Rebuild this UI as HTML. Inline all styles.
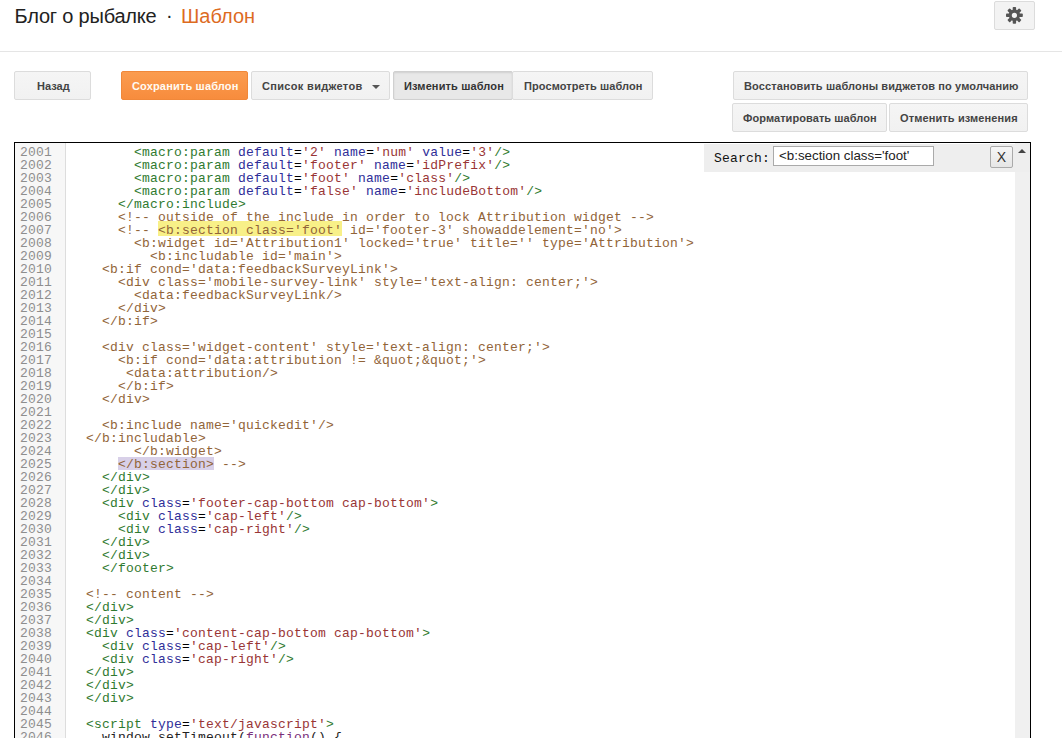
<!DOCTYPE html>
<html><head><meta charset="utf-8">
<style>
*{margin:0;padding:0;box-sizing:border-box}
html,body{width:1062px;height:738px;overflow:hidden;background:#fff}
body{position:relative;font-family:"Liberation Sans",sans-serif}
.title{position:absolute;left:16px;top:4px;font-size:20px;line-height:24px;color:#222;white-space:nowrap}
.title .dot{color:#222;padding:0 8px}
.or{color:#dd6b1f !important}
.hr{position:absolute;left:0;top:51px;width:1062px;height:1px;background:#e5e5e5}
.btn{position:absolute;height:29px;border:1px solid #dcdcdc;border-radius:2px;background:linear-gradient(#f5f5f5,#f1f1f1);color:#444;font-size:11px;font-weight:bold;line-height:29px;text-align:left;white-space:nowrap}
.gear{position:absolute;left:994px;top:1px;width:41px;height:29px;border:1px solid #dcdcdc;border-radius:2px;background:#f3f3f3}
.orange{background:linear-gradient(#fb9c4f,#f78c3d);border-color:#f0883a;color:#fffaf2}
.sel{background:#e8e8e8;border-color:#d0d0d0;box-shadow:inset 0 1px 2px rgba(0,0,0,.1);color:#333}
.editor{position:absolute;left:14px;top:142px;width:1017px;height:620px;border:1px solid #000;border-bottom:none;background:#fff;overflow:hidden}
.gutter{position:absolute;left:0;top:0;width:51px;height:100%;background:#f7f7f7;border-right:1px solid #ddd}
.code{position:absolute;font-family:"Liberation Mono",monospace;font-size:13px;line-height:13px;white-space:pre;letter-spacing:.2px}
.nums{left:5px;top:2.5px;color:#8e8e8e}
.lines{left:55px;top:2.5px;color:#000}
.t{color:#2f7a2f}.a{color:#2e2e98}.v{color:#993535}.c{color:#916438}.js{color:#222}.kw{color:#7a2f7a}
.hlb{position:absolute;left:143px;top:78px;width:184px;height:15px;background:#f8f088}
.hlb2{position:absolute;left:103px;top:314px;width:96px;height:13px;background:#d8d0e8}
.scroll{position:absolute;left:1000px;top:0;width:16px;height:100%;background:#f0f0f0}
.search{position:absolute;left:689px;top:1px;width:327px;height:28px;background:#eee}
.slabel{position:absolute;left:10px;top:8px;font-family:"Liberation Mono",monospace;font-size:13px;line-height:13px;color:#111;letter-spacing:.2px}
.sinput{position:absolute;left:69px;top:2px;width:161px;height:20px;border:1px solid #aaa;background:#fff;font-size:13.33px;line-height:18px;padding-left:5px;color:#222;white-space:nowrap}
.xbtn{position:absolute;left:286px;top:2px;width:23px;height:22px;border:1px solid #aaa;border-radius:2px;background:linear-gradient(#f6f6f6,#e6e6e6);font-size:14px;line-height:21px;text-align:center;color:#333}
.sarrow{position:absolute;left:1003px;top:6px;width:0;height:0;border-left:4px solid transparent;border-right:4px solid transparent;border-bottom:4px solid #444}
.ddarrow{position:absolute;width:0;height:0;border-left:4px solid transparent;border-right:4px solid transparent;border-top:4px solid #555}
</style></head><body>
<div class="title" style="left:14.5px;letter-spacing:-.2px">Блог о рыбалке</div>
<div class="title" style="left:166px;top:3px">·</div>
<div class="title or" style="left:181px">Шаблон</div>
<div class="gear"><svg width="41" height="29" viewBox="0 0 41 29" style="position:absolute;left:-1px;top:-1px"><g transform="translate(20.4 14.3)" fill="#555"><rect x="-1.7" y="-8.4" width="3.4" height="4.2" rx=".8" transform="rotate(0)"/><rect x="-1.7" y="-8.4" width="3.4" height="4.2" rx=".8" transform="rotate(45)"/><rect x="-1.7" y="-8.4" width="3.4" height="4.2" rx=".8" transform="rotate(90)"/><rect x="-1.7" y="-8.4" width="3.4" height="4.2" rx=".8" transform="rotate(135)"/><rect x="-1.7" y="-8.4" width="3.4" height="4.2" rx=".8" transform="rotate(180)"/><rect x="-1.7" y="-8.4" width="3.4" height="4.2" rx=".8" transform="rotate(225)"/><rect x="-1.7" y="-8.4" width="3.4" height="4.2" rx=".8" transform="rotate(270)"/><rect x="-1.7" y="-8.4" width="3.4" height="4.2" rx=".8" transform="rotate(315)"/><path fill-rule="evenodd" d="M0-5.7A5.7 5.7 0 1 1 0 5.7A5.7 5.7 0 1 1 0-5.7ZM0-2.6A2.6 2.6 0 1 0 0 2.6A2.6 2.6 0 1 0 0-2.6Z"/></g></svg></div>
<div class="hr"></div>
<div class="btn" style="left:14px;top:71px;width:77px;padding-left:22px">Назад</div>
<div class="btn orange" style="left:121px;top:71px;width:127px;padding-left:10px;letter-spacing:.16px">Сохранить шаблон</div>
<div class="btn" style="left:251px;top:71px;width:139px;padding-left:10px;letter-spacing:.33px">Список виджетов<span class="ddarrow" style="left:120px;top:13px"></span></div>
<div class="btn sel" style="left:393px;top:71px;width:120px;padding-left:10px;letter-spacing:.13px">Изменить шаблон</div>
<div class="btn" style="left:512px;top:71px;width:141px;padding-left:11px;letter-spacing:.08px">Просмотреть шаблон</div>
<div class="btn" style="left:733px;top:71px;width:295px;padding-left:10px;letter-spacing:.12px">Восстановить шаблоны виджетов по умолчанию</div>
<div class="btn" style="left:732px;top:103px;width:155px;padding-left:10px;letter-spacing:.07px">Форматировать шаблон</div>
<div class="btn" style="left:889px;top:103px;width:139px;padding-left:10px;letter-spacing:.12px">Отменить изменения</div>
<div class="editor">
<div class="gutter"></div><div class="hlb"></div><div class="hlb2"></div>
<div class="code nums">2001
2002
2003
2004
2005
2006
2007
2008
2009
2010
2011
2012
2013
2014
2015
2016
2017
2018
2019
2020
2021
2022
2023
2024
2025
2026
2027
2028
2029
2030
2031
2032
2033
2034
2035
2036
2037
2038
2039
2040
2041
2042
2043
2044
2045
2046</div>
<div class="code lines">        <span class="t">&lt;macro:param</span> <span class="a">default</span>=<span class="v">&#x27;2&#x27;</span> <span class="a">name</span>=<span class="v">&#x27;num&#x27;</span> <span class="a">value</span>=<span class="v">&#x27;3&#x27;</span><span class="t">/&gt;</span>
        <span class="t">&lt;macro:param</span> <span class="a">default</span>=<span class="v">&#x27;footer&#x27;</span> <span class="a">name</span>=<span class="v">&#x27;idPrefix&#x27;</span><span class="t">/&gt;</span>
        <span class="t">&lt;macro:param</span> <span class="a">default</span>=<span class="v">&#x27;foot&#x27;</span> <span class="a">name</span>=<span class="v">&#x27;class&#x27;</span><span class="t">/&gt;</span>
        <span class="t">&lt;macro:param</span> <span class="a">default</span>=<span class="v">&#x27;false&#x27;</span> <span class="a">name</span>=<span class="v">&#x27;includeBottom&#x27;</span><span class="t">/&gt;</span>
      <span class="t">&lt;/macro:include</span><span class="t">&gt;</span>
      <span class="c">&lt;!-- outside of the include in order to lock Attribution widget --&gt;</span>
      <span class="c">&lt;!-- <span>&lt;b:section class=&#x27;foot&#x27;</span> id=&#x27;footer-3&#x27; showaddelement=&#x27;no&#x27;&gt;</span>
        <span class="c">&lt;b:widget id=&#x27;Attribution1&#x27; locked=&#x27;true&#x27; title=&#x27;&#x27; type=&#x27;Attribution&#x27;&gt;</span>
          <span class="c">&lt;b:includable id=&#x27;main&#x27;&gt;</span>
    <span class="c">&lt;b:if cond=&#x27;data:feedbackSurveyLink&#x27;&gt;</span>
      <span class="c">&lt;div class=&#x27;mobile-survey-link&#x27; style=&#x27;text-align: center;&#x27;&gt;</span>
        <span class="c">&lt;data:feedbackSurveyLink/&gt;</span>
      <span class="c">&lt;/div&gt;</span>
    <span class="c">&lt;/b:if&gt;</span>
<span class="c"></span>
    <span class="c">&lt;div class=&#x27;widget-content&#x27; style=&#x27;text-align: center;&#x27;&gt;</span>
      <span class="c">&lt;b:if cond=&#x27;data:attribution != &amp;quot;&amp;quot;&#x27;&gt;</span>
       <span class="c">&lt;data:attribution/&gt;</span>
      <span class="c">&lt;/b:if&gt;</span>
    <span class="c">&lt;/div&gt;</span>
<span class="c"></span>
    <span class="c">&lt;b:include name=&#x27;quickedit&#x27;/&gt;</span>
  <span class="c">&lt;/b:includable&gt;</span>
        <span class="c">&lt;/b:widget&gt;</span>
      <span class="c"><span>&lt;/b:section&gt;</span> --&gt;</span>
    <span class="t">&lt;/div</span><span class="t">&gt;</span>
    <span class="t">&lt;/div</span><span class="t">&gt;</span>
    <span class="t">&lt;div</span> <span class="a">class</span>=<span class="v">&#x27;footer-cap-bottom cap-bottom&#x27;</span><span class="t">&gt;</span>
      <span class="t">&lt;div</span> <span class="a">class</span>=<span class="v">&#x27;cap-left&#x27;</span><span class="t">/&gt;</span>
      <span class="t">&lt;div</span> <span class="a">class</span>=<span class="v">&#x27;cap-right&#x27;</span><span class="t">/&gt;</span>
    <span class="t">&lt;/div</span><span class="t">&gt;</span>
    <span class="t">&lt;/div</span><span class="t">&gt;</span>
    <span class="t">&lt;/footer</span><span class="t">&gt;</span>

  <span class="c">&lt;!-- content --&gt;</span>
  <span class="t">&lt;/div</span><span class="t">&gt;</span>
  <span class="t">&lt;/div</span><span class="t">&gt;</span>
  <span class="t">&lt;div</span> <span class="a">class</span>=<span class="v">&#x27;content-cap-bottom cap-bottom&#x27;</span><span class="t">&gt;</span>
    <span class="t">&lt;div</span> <span class="a">class</span>=<span class="v">&#x27;cap-left&#x27;</span><span class="t">/&gt;</span>
    <span class="t">&lt;div</span> <span class="a">class</span>=<span class="v">&#x27;cap-right&#x27;</span><span class="t">/&gt;</span>
  <span class="t">&lt;/div</span><span class="t">&gt;</span>
  <span class="t">&lt;/div</span><span class="t">&gt;</span>
  <span class="t">&lt;/div</span><span class="t">&gt;</span>

  <span class="t">&lt;script</span> <span class="a">type</span>=<span class="v">&#x27;text/javascript&#x27;</span><span class="t">&gt;</span>
    <span class="js">window.setTimeout(<span class="kw">function</span>() {</span></div>
<div class="scroll"></div>
<div class="search"><span class="slabel">Search:</span><div class="sinput">&lt;b:section class='foot'</div><div class="xbtn">X</div></div><div class="sarrow"></div>
</div>
</body></html>
